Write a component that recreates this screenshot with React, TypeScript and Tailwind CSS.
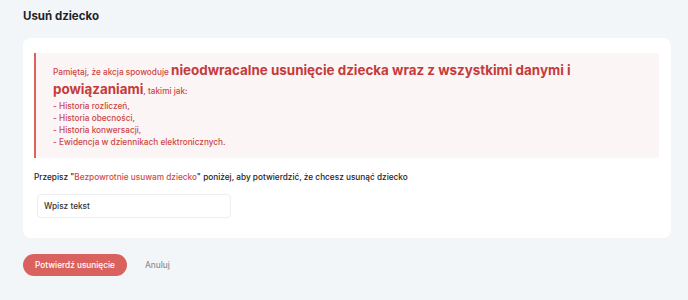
export default function App() {
  return (
    <div
      className="min-h-[300px] w-[688px] bg-[#f3f6f9] px-[23px] pt-[9px] text-[#1f2328]"
      style={{ fontFamily: "Inter, 'Noto Sans', sans-serif" }}
    >
      <h1 className="text-[11.5px] font-bold leading-[14px]">Usuń dziecko</h1>

      <div className="mt-[15px] w-[648px] rounded-lg bg-white pb-[20px] pl-[11px] pr-[12px] pt-[15px]">
        <div className="border-l-[2px] border-[#d9625f] bg-[#fcf5f5] pb-[10px] pl-[17px] pr-4 pt-[10px] font-medium text-[#cc4545]">
          <p className="text-[8.25px] leading-[19px]">
            Pamiętaj, że akcja spowoduje{" "}
            <span className="text-[13.4px] font-bold leading-none text-[#c53b3b]">
              nieodwracalne usunięcie dziecka wraz z wszystkimi danymi i powiązaniami
            </span>
            , takimi jak:
          </p>
          <ul className="-mt-px text-[8.25px] leading-[12px]">
            <li>- Historia rozliczeń,</li>
            <li>- Historia obecności,</li>
            <li>- Historia konwersacji,</li>
            <li>- Ewidencja w dziennikach elektronicznych.</li>
          </ul>
        </div>

        <p className="mt-[13px] text-[8.25px] font-medium leading-[12px] text-[#1f2328]">
          Przepisz "<span className="text-[#d04a4a]">Bezpowrotnie usuwam dziecko</span>" poniżej, aby potwierdzić,
          że chcesz usunąć dziecko
        </p>

        <input
          type="text"
          placeholder="Wpisz tekst"
          className="ml-[3px] mt-[11px] h-[24px] w-[194px] rounded-[4px] border border-[#eceef1] px-[6px] text-[8.25px] font-medium text-[#333] outline-none placeholder:text-[#333]"
        />
      </div>

      <div className="mt-[16px] flex items-center gap-[18px]">
        <button
          type="button"
          className="h-[22px] w-[104px] rounded-full bg-[#d9625f] text-[8.25px] font-medium text-white"
        >
          Potwierdź usunięcie
        </button>
        <button type="button" className="text-[8.25px] font-medium text-[#8a8d91]">
          Anuluj
        </button>
      </div>
    </div>
  );
}
